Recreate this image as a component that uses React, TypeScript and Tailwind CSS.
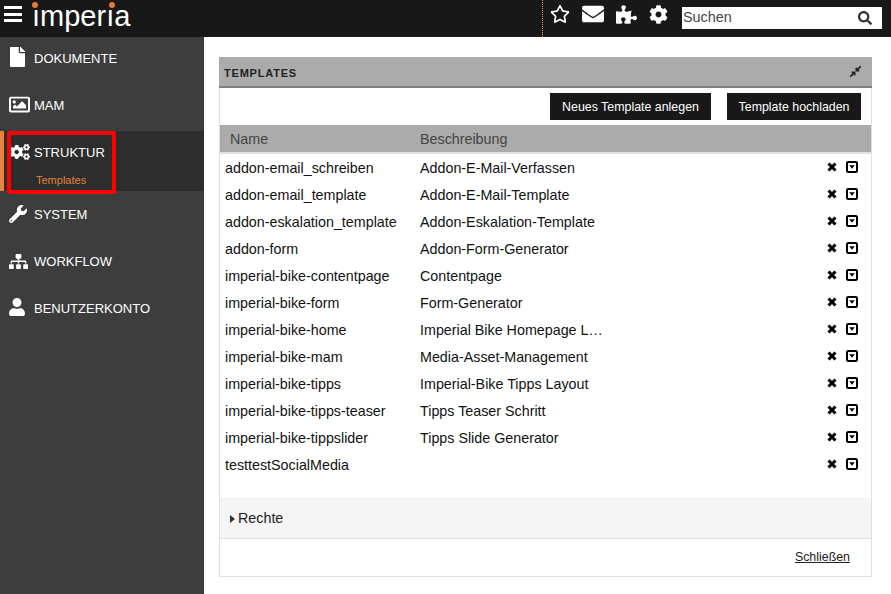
import { FaCog, FaCogs, FaCompressAlt, FaEnvelope, FaFile, FaPuzzlePiece, FaRegImage, FaRegStar, FaSearch, FaSitemap, FaUser, FaWrench } from "react-icons/fa";

const templates = [
  ["addon-email_schreiben", "Addon-E-Mail-Verfassen"],
  ["addon-email_template", "Addon-E-Mail-Template"],
  ["addon-eskalation_template", "Addon-Eskalation-Template"],
  ["addon-form", "Addon-Form-Generator"],
  ["imperial-bike-contentpage", "Contentpage"],
  ["imperial-bike-form", "Form-Generator"],
  ["imperial-bike-home", "Imperial Bike Homepage L…"],
  ["imperial-bike-mam", "Media-Asset-Management"],
  ["imperial-bike-tipps", "Imperial-Bike Tipps Layout"],
  ["imperial-bike-tipps-teaser", "Tipps Teaser Schritt"],
  ["imperial-bike-tippslider", "Tipps Slide Generator"],
  ["testtestSocialMedia", ""],
];

function CaretSquare() {
  return (
    <svg viewBox="0 0 12 12" className="h-[12px] w-[12px] text-black">
      <rect x="1" y="1" width="10" height="10" rx="1.2" fill="none" stroke="currentColor" strokeWidth="2" />
      <path d="M3.2 4.2 H8.8 L6 7.8 Z" fill="currentColor" />
    </svg>
  );
}

function CloseMark() {
  return (
    <svg viewBox="0 0 10 10" className="h-[10px] w-[10px] text-black">
      <path d="M1.5 1.5 L8.5 8.5 M8.5 1.5 L1.5 8.5" fill="none" stroke="currentColor" strokeWidth="3" />
    </svg>
  );
}

function Burger() {
  return (
    <div className="mb-[9px] ml-[4px] flex h-[16px] w-[18px] flex-col justify-between">
      <span className="h-[3px] bg-white" />
      <span className="h-[3px] bg-white" />
      <span className="h-[3px] bg-white" />
    </div>
  );
}

function Logo() {
  return (
    <div className="relative ml-[10px] h-[37px] w-[100px] overflow-hidden">
      <span className="absolute left-0 top-0 text-[29px] leading-[32px] text-white">ımperıa</span>
      <span className="absolute left-[0px] top-[2px] h-[6px] w-[6px] rounded-full bg-[#e8793a]" />
      <span className="absolute left-[77px] top-[2px] h-[6px] w-[6px] rounded-full bg-[#e8793a]" />
    </div>
  );
}

function Header() {
  return (
    <header className="flex h-[37px] items-center bg-[#181818]">
      <Burger />
      <Logo />
      <div className="ml-auto flex h-full items-center">
        <div className="h-full border-l border-dotted border-[#e8a060]" />
        <div className="mb-[9px] ml-[7px] flex w-[128px] items-center gap-[12px] text-white">
          <FaRegStar className="h-[20px] w-[20px]" />
          <FaEnvelope className="h-[22px] w-[22px]" />
          <FaPuzzlePiece className="h-[21px] w-[21px]" />
          <FaCog className="h-[19px] w-[19px]" />
        </div>
        <div className="mb-[2px] ml-[4px] mr-[9px] flex h-[22px] w-[200px] items-center justify-between bg-white pl-[1px] pr-[10px] text-[14.4px] text-[#444]">
          <span>Suchen</span>
          <FaSearch className="h-[14px] w-[14px] text-[#333]" />
        </div>
      </div>
    </header>
  );
}

function NavItem({ icon, label, gap = "" }: { icon: React.ReactNode; label: string; gap?: string }) {
  return (
    <div className={`flex h-[47px] items-start pl-[9px] pt-[15px] text-[13px] leading-[14px] text-white ${gap}`}>
      <span className="flex h-[14px] w-[25px] items-center">{icon}</span>
      <span>{label}</span>
    </div>
  );
}

function Sidebar() {
  return (
    <aside className="w-[204px] shrink-0 bg-[#3d3d3d]">
      <NavItem icon={<FaFile className="h-[20px] w-[17px] -translate-y-[2px]" />} label="DOKUMENTE" />
      <NavItem icon={<FaRegImage className="h-[21px] w-[21px] -translate-y-[2px]" />} label="MAM" />
      <div className="relative h-[60px] border-l-[4px] border-[#e8833a] bg-[#2d2d2d] pl-[6px] pt-[15px] text-white">
        <div className="flex h-[14px] items-center text-[13px] leading-[14px]">
          <FaCogs className="mr-[4px] h-[20px] w-[20px] -translate-y-[1px]" />
          <span>STRUKTUR</span>
        </div>
        <div className="ml-[26px] mt-[14px] text-[11px] leading-[13px] text-[#e0823d]">Templates</div>
        <div className="absolute left-[3px] top-0 h-[63px] w-[109px] rounded-[2px] border-[4px] border-[#ff0000]" />
      </div>
      <NavItem gap="mt-[2px]" icon={<FaWrench className="h-[18px] w-[18px] -translate-y-[1px]" />} label="SYSTEM" />
      <NavItem icon={<FaSitemap className="h-[19px] w-[19px] -translate-y-[1px]" />} label="WORKFLOW" />
      <NavItem icon={<FaUser className="h-[18px] w-[16px] -translate-y-[2px]" />} label="BENUTZERKONTO" />
    </aside>
  );
}

function Panel() {
  return (
    <section className="border-x border-b border-[#e0e0e0]">
      <div className="-mx-px flex h-[31px] items-center justify-between border-b-2 border-[#808080] bg-[#ababab] pl-[5px] pr-[10px] pt-[3px] text-[11px] font-bold tracking-[0.8px] text-[#222]">
        <span>TEMPLATES</span>
        <FaCompressAlt className="h-[13px] w-[13px] -translate-y-[2px] text-[#222]" />
      </div>
      <div className="flex justify-end gap-[16px] pr-[10px] pt-[5px] pb-[5px]">
        <button className="h-[27px] w-[161px] bg-[#181818] pt-[1px] text-[12.4px] text-white">Neues Template anlegen</button>
        <button className="h-[27px] w-[134px] bg-[#181818] pt-[1px] text-[12.4px] text-white">Template hochladen</button>
      </div>
      <div className="flex h-[29px] items-start border-b-2 border-[#e0e0e0] bg-[#ababab] pt-[6px] text-[14.3px] leading-[16px] text-[#444]">
        <span className="ml-[10px] w-[190px]">Name</span>
        <span>Beschreibung</span>
      </div>
      <div className="h-[344px] pt-[1px]">
        {templates.map(([name, desc]) => (
          <div key={name} className="flex h-[27px] items-center pl-[5px] text-[14.3px] text-[#111]">
            <span className="w-[195px]">{name}</span>
            <span>{desc}</span>
            <span className="ml-auto flex -translate-y-[2px] items-center gap-[9px] pr-[13px]">
              <CloseMark />
              <CaretSquare />
            </span>
          </div>
        ))}
      </div>
      <div className="flex h-[41px] items-center border-b border-[#e0e0e0] bg-[#f5f5f5] pl-[10px] pt-[1px] text-[14.3px] text-[#222]">
        <span className="mr-[3px] h-0 w-0 border-y-[4px] border-l-[5px] border-y-transparent border-l-[#333]" />
        Rechte
      </div>
      <div className="flex h-[37px] items-center justify-end pr-[21px] text-[12.4px] text-[#222] underline">Schließen</div>
    </section>
  );
}

export default function App() {
  return (
    <div className="flex h-[594px] w-[891px] flex-col overflow-hidden bg-white font-['Liberation_Sans',Arial,sans-serif]">
      <Header />
      <div className="flex flex-1">
        <Sidebar />
        <main className="flex-1 pl-[15px] pr-[19px] pt-[20px]">
          <Panel />
        </main>
      </div>
    </div>
  );
}
